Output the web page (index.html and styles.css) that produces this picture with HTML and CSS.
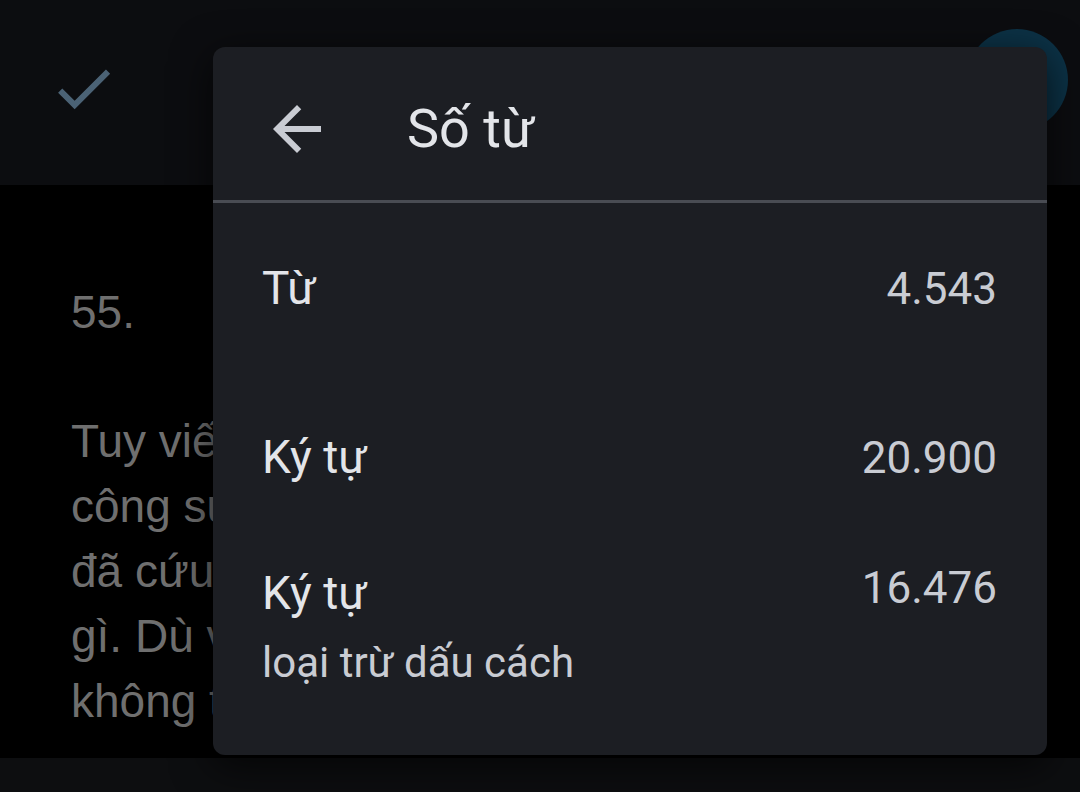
FILE: index.html
```html
<!DOCTYPE html>
<html lang="vi">
<head>
  <meta charset="UTF-8">
  <title>Số từ</title>
  <link rel="stylesheet" href="styles.css">
</head>
<body>
  <header class="topbar">
    <svg class="check" viewBox="0 0 24 24" width="71" height="71">
      <path d="M9 16.17L4.83 12l-1.42 1.41L9 19 21 7l-1.41-1.41z"/>
    </svg>
    <div class="avatar"></div>
  </header>

  <main class="doc">
    <p>55.</p>
    <p class="spacer"></p>
    <p>Tuy viết đến</p>
    <p>công sức của</p>
    <p>đã cứu lấy</p>
    <p>gì. Dù vậy</p>
    <p>không thể</p>
  </main>

  <footer class="bottombar"></footer>

  <div class="dialog">
    <div class="dialog-head">
      <svg class="back" viewBox="0 0 24 24" width="72" height="72">
        <path d="M20 11H7.83l5.59-5.59L12 4l-8 8 8 8 1.41-1.41L7.83 13H20v-2z"/>
      </svg>
      <h2>Số từ</h2>
    </div>

    <div class="stats">
      <div class="stat">
        <div class="label">Từ</div>
        <div class="value">4.543</div>
      </div>
      <div class="stat stat-chars">
        <div class="label">Ký tự</div>
        <div class="value">20.900</div>
      </div>
      <div class="stat stat-nospace">
        <div>
          <div class="label">Ký tự</div>
          <div class="sublabel">loại trừ dấu cách</div>
        </div>
        <div class="value value-raised">16.476</div>
      </div>
    </div>
  </div>
</body>
</html>
```

FILE: styles.css
```css
:root {
  --bar-bg: #0c0d10;
  --dialog-bg: #1c1e23;
  --divider: #494c53;
  --title: #e3e5e9;
  --value: #c9ccd3;
  --doc-text: #6f6f6f;
}

* {
  box-sizing: border-box;
}

body {
  margin: 0;
  height: 100vh;
  display: flex;
  flex-direction: column;
  overflow: hidden;
  background: #000;
  font-family: Roboto, "Noto Sans", sans-serif;
}

.topbar {
  height: 185px;
  display: flex;
  justify-content: space-between;
  align-items: flex-start;
  padding: 29px 12px 0 48px;
  background: var(--bar-bg);
}

.check {
  margin-top: 24px;
  fill: #4b6275;
}

.avatar {
  width: 102px;
  height: 102px;
  border-radius: 50%;
  background: #0c3246;
}

/* document behind the dialog, cut off where the dialog starts */
.doc {
  flex: 1;
  width: 213px;
  overflow: hidden;
  padding: 95px 0 0 71px;
  font-family: "Liberation Sans", Arial, sans-serif;
  font-size: 46px;
  line-height: 65px;
  color: var(--doc-text);
}

.doc p {
  margin: 0;
  white-space: nowrap;
}

.spacer {
  height: 64px;
}

.bottombar {
  height: 34px;
  background: #0d0e10;
}

/* word count dialog */
.dialog {
  position: absolute;
  left: 213px;
  top: 47px;
  width: 834px;
  height: 708px;
  border-radius: 12px;
  background: var(--dialog-bg);
  box-shadow: 0 10px 40px rgba(0, 0, 0, 0.7);
}

.dialog-head {
  height: 156px;
  display: flex;
  align-items: center;
  padding: 10px 0 0 48px;
  border-bottom: 3px solid var(--divider);
}

.back {
  fill: var(--value);
}

.dialog-head h2 {
  margin: 0 0 0 74px;
  font-size: 54px;
  font-weight: 400;
  line-height: 64px;
  color: var(--title);
}

.stats {
  padding: 57px 50px 0 49px;
}

.stat {
  display: flex;
  justify-content: space-between;
  align-items: baseline;
}

.stat-chars {
  margin-top: 112px;
}

.stat-nospace {
  margin-top: 79px;
}

.label {
  font-size: 46px;
  line-height: 56px;
  color: var(--title);
}

.sublabel {
  margin-top: 16px;
  font-size: 42px;
  line-height: 52px;
  color: var(--value);
}

.value {
  font-size: 44px;
  line-height: 56px;
  color: var(--value);
}

.value-raised {
  margin-top: -5px;
  align-self: flex-start;
}
```
